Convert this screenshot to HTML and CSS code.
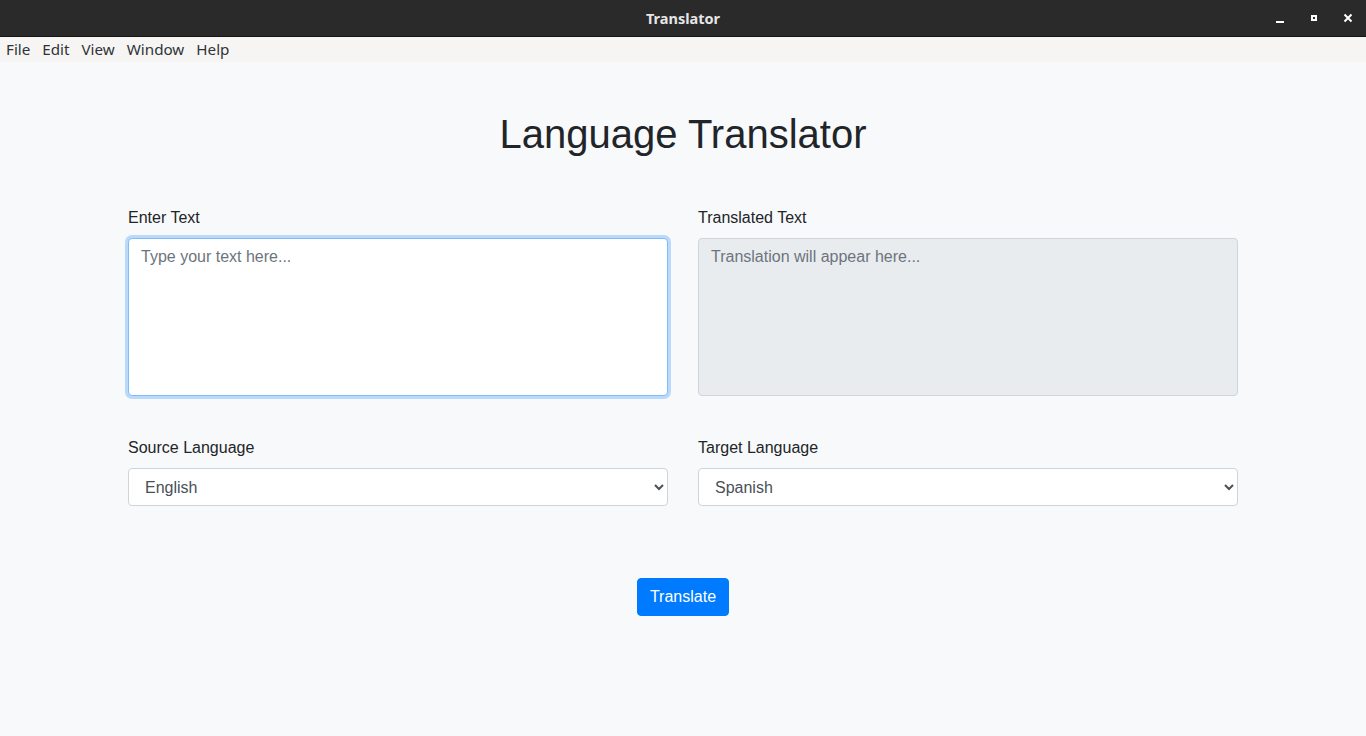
FILE: index.html
```html
<!DOCTYPE html>
<html lang="en">
<head>
<meta charset="utf-8">
<title>Translator</title>
<link rel="stylesheet" href="styles.css">
</head>
<body>
<header class="titlebar">
  <div class="title">Translator</div>
  <div class="controls">
    <span class="ctl"><svg width="12" height="12" viewBox="0 0 12 12"><rect x="2" y="9" width="8" height="2" fill="#fff"/></svg></span>
    <span class="ctl"><svg width="12" height="12" viewBox="0 0 12 12"><path d="M3 3h6v6H3z M5 5v2h2V5z" fill="#fff" fill-rule="evenodd"/></svg></span>
    <span class="ctl"><svg width="12" height="12" viewBox="0 0 12 12"><path d="M2.5 2.5l7 7M9.5 2.5l-7 7" stroke="#fff" stroke-width="2"/></svg></span>
  </div>
</header>
<nav class="menubar">
  <span>File</span><span>Edit</span><span>View</span><span>Window</span><span>Help</span>
</nav>
<main class="page">
  <div class="container">
    <h1 class="heading">Language Translator</h1>
    <div class="row">
      <div class="col">
        <label class="label" for="src">Enter Text</label>
        <textarea id="src" class="control area focused" rows="6" placeholder="Type your text here..."></textarea>
      </div>
      <div class="col">
        <label class="label" for="out">Translated Text</label>
        <textarea id="out" class="control area readonly" rows="6" readonly placeholder="Translation will appear here..."></textarea>
      </div>
    </div>
    <div class="row row2">
      <div class="col">
        <label class="label" for="sl">Source Language</label>
        <select id="sl" class="control select">
          <option>English</option>
        </select>
      </div>
      <div class="col">
        <label class="label" for="tl">Target Language</label>
        <select id="tl" class="control select">
          <option>Spanish</option>
        </select>
      </div>
    </div>
    <div class="actions">
      <button class="btn" type="button">Translate</button>
    </div>
  </div>
</main>
</body>
</html>
```

FILE: styles.css
```css
* { box-sizing: border-box; }
html, body { margin: 0; padding: 0; height: 100%; }
body {
  background: #f8f9fa;
  font-family: "Liberation Sans", Arial, sans-serif;
  color: #212529;
  display: flex;
  flex-direction: column;
  overflow: hidden;
}
.titlebar {
  height: 37px;
  background: #2a2a2a;
  border-bottom: 1px solid #151515;
  display: flex;
  align-items: center;
  justify-content: center;
  position: relative;
  flex: none;
}
.title {
  color: #e6e6e6;
  font-family: "Noto Sans", "Open Sans", sans-serif;
  font-weight: 700;
  font-size: 14.5px;
}
.controls {
  position: absolute;
  right: 12px;
  top: 12px;
  display: flex;
  gap: 22px;
}
.ctl { width: 12px; height: 12px; display: block; }
.ctl svg { display: block; }
.menubar {
  height: 25px;
  background: #f6f5f4;
  display: flex;
  align-items: center;
  gap: 12px;
  padding-left: 6px;
  padding-bottom: 1px;
  font-family: "Noto Sans", "Open Sans", sans-serif;
  font-size: 15.2px;
  color: #2e3436;
  flex: none;
}
.page { flex: 1; }
.container {
  width: 1110px;
  margin: 0 auto;
  padding-top: 48px;
}
.heading {
  margin: 0 0 48px;
  font-size: 40px;
  font-weight: 500;
  line-height: 48px;
  text-align: center;
}
.row {
  display: flex;
  gap: 30px;
}
.row2 { margin-top: 40px; }
.col { flex: 1; display: flex; flex-direction: column; }
.label {
  font-size: 16px;
  line-height: 24px;
  margin-bottom: 8px;
}
.control {
  font-family: inherit;
  font-size: 16px;
  line-height: 24px;
  color: #495057;
  background: #fff;
  border: 1px solid #ced4da;
  border-radius: 4px;
  padding: 6px 12px;
  width: 100%;
}
.area { height: 158px; resize: none; }
.control::placeholder { color: #6c757d; }
.focused {
  border-color: #80bdff;
  box-shadow: 0 0 0 3px rgba(0,123,255,.25);
  outline: none;
}
.readonly { background: #e9ecef; }
.select { height: 38px; padding: 6px 12px; }
.actions {
  display: flex;
  justify-content: center;
  margin-top: 72px;
}
.btn {
  font-family: inherit;
  font-size: 16px;
  line-height: 24px;
  color: #fff;
  background: #007bff;
  border: 1px solid #007bff;
  border-radius: 4px;
  padding: 6px 12px;
  height: 38px;
}
```
